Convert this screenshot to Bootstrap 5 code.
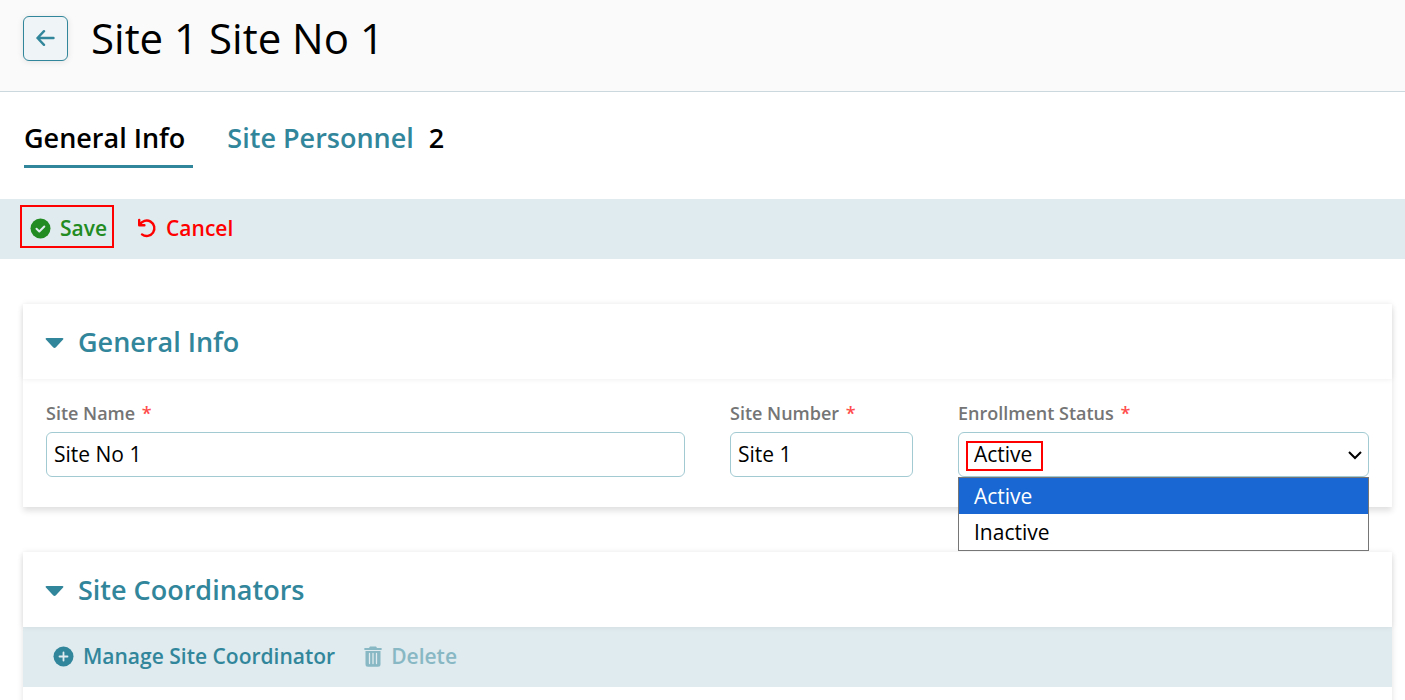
<!DOCTYPE html>
<html lang="en">
<head>
<meta charset="utf-8">
<meta name="viewport" content="width=device-width, initial-scale=1">
<title>Site 1 Site No 1</title>
<link href="https://cdn.jsdelivr.net/npm/bootstrap@5.3.0/dist/css/bootstrap.min.css" rel="stylesheet">
<style>
:root { --teal: #32869b; --teal-pale: #dfebef; --teal-line: #a2cad2; --mark-red: #f00; }
body { font-family: "Open Sans", "Noto Sans", sans-serif; color: #000; background: #fff; font-size: 20px; line-height: 30px; overflow-x: hidden; }
.page-head { background: #fafafa; border-bottom: 1px solid #cbd8de; padding: 8px 24px 23px 23px; gap: 23px; }
.page-head h1 { font-size: 42px; line-height: 60px; font-weight: 400; }
.back-btn { width: 45px; height: 45px; padding: 0 0 2px; border: 1px solid var(--teal); border-radius: 6px; background: #eff5f6; color: var(--teal); box-shadow: 0 1px 6px rgba(0,0,0,.1); }
.site-tabs { padding: 24px 24px 31px; gap: 34px; }
.site-tabs .nav-link { font-size: 27px; line-height: 44px; font-weight: 600; color: var(--teal); padding: 0 8px 5px 0; border-bottom: 3px solid transparent; }
.site-tabs .nav-link.active { color: #000; border-color: var(--teal); }
.tab-count { color: #000; font-weight: 600; margin-left: 8px; }
.action-bar { background: var(--teal-pale); height: 60px; padding-top: 6px; }
.page-bar { padding-left: 20px; gap: 13px; }
.panel-bar { padding-left: 20px; gap: 12px; }
.tool-btn { height: 43px; padding: 3px 5px 0 8px; gap: 9px; font-size: 21px; line-height: 30px; font-weight: 600; border: 2px solid transparent; border-radius: 0; color: var(--teal); }
.tool-btn:disabled { color: var(--teal); opacity: .5; border-color: transparent; }
.tool-btn.save { color: #228b22; border-color: var(--mark-red); }
.tool-btn.cancel { color: #f00; }
.panels { padding: 45px 13px 0 23px; gap: 45px; }
.panel { box-shadow: 0 4px 6px rgba(0,0,0,.12); background: #fff; }
.panel-head { height: 75px; padding: 0 22px; background: #fff; box-shadow: 0 0 6px rgba(0,0,0,.08); position: relative; }
.panel-head h2 { font-size: 27px; line-height: 40px; font-weight: 600; color: var(--teal); }
.panel-head button { gap: 14px; color: inherit; font: inherit; }
.panel-head svg { margin-top: 2px; }
.panel-body { padding: 19px 23px 30px; }
.panel-body .row { --bs-gutter-x: 45px; }
.form-label { font-size: 18px; line-height: 30px; font-weight: 600; color: #757575; margin-bottom: 4px; }
.form-label span { color: #ff4d4d; margin-left: 2px; }
.form-control, .form-select { height: 45px; border: 1px solid var(--teal-line); border-radius: 6px; font-size: 21px; line-height: 30px; color: #000; padding: 0 7px 2px; }
.form-select { padding: 0 36px 2px 15px; background-size: 16px 16px; background-position: right 5px center; background-image: url("data:image/svg+xml,%3csvg xmlns='http://www.w3.org/2000/svg' viewBox='0 0 16 16'%3e%3cpath fill='none' stroke='%23000' stroke-width='2' d='M2 5l6 6 6-6'/%3e%3c/svg%3e"); }
.callout { position: absolute; left: 8px; top: 9px; width: 77px; height: 30px; border: 2px solid var(--mark-red); pointer-events: none; }
.option-list { position: absolute; top: 100%; left: 0; right: 0; z-index: 5; background: #fff; border: 1px solid #767676; font-size: 21px; }
.option-list li { padding: 3px 15px; line-height: 30px; }
.option-list li[aria-selected="true"] { background: #1967d2; color: #fff; }
</style>
</head>
<body>
<header class="page-head d-flex align-items-start">
  <button type="button" class="back-btn btn mt-2 d-flex align-items-center justify-content-center flex-shrink-0" aria-label="Back">
    <svg width="20" height="20" viewBox="0 0 20 20" fill="none" stroke="currentColor" stroke-width="2.400" stroke-linecap="round" stroke-linejoin="round"><path d="M17.500 10H1.500M8 3.200L1.500 10 8 16.800"/></svg>
  </button>
  <h1 class="m-0">Site 1 Site No 1</h1>
</header>

<main>
  <nav class="site-tabs nav" aria-label="Site sections">
    <a class="nav-link active" aria-current="page" href="#general">General Info</a>
    <a class="nav-link" href="#personnel">Site Personnel <span class="tab-count">2</span></a>
  </nav>

  <div class="action-bar page-bar d-flex align-items-start">
    <button type="button" class="tool-btn save btn d-flex align-items-center">
      <svg width="21" height="21" viewBox="0 0 21 21"><circle cx="10.500" cy="10.500" r="10" fill="currentColor"/><path d="M6.500 10.800l2.800 2.700 5-5" fill="none" stroke="#dfebef" stroke-width="2" stroke-linecap="round" stroke-linejoin="round"/></svg>
      Save
    </button>
    <button type="button" class="tool-btn cancel btn d-flex align-items-center">
      <svg width="20" height="20" viewBox="0 0 20 20" fill="none" stroke="currentColor" stroke-width="2.400" stroke-linecap="round" stroke-linejoin="round"><path d="M2.200 2v5.200h5.200M2.800 6.800A7.700 7.700 0 1 1 5 16.400"/></svg>
      Cancel
    </button>
  </div>

  <div class="panels d-flex flex-column">
    <section class="panel" id="general">
      <div class="panel-head d-flex align-items-center">
        <h2 class="m-0"><button type="button" class="btn p-0 border-0 d-flex align-items-center" aria-expanded="true">
          <svg width="19" height="12" viewBox="0 0 19 12" fill="currentColor"><path d="M1.600 1h15.800c1 0 1.300.9.700 1.600l-7.200 7.600c-.8.900-2 .9-2.800 0L.9 2.600C.3 1.900.6 1 1.600 1z"/></svg>
          General Info
        </button></h2>
      </div>
      <div class="panel-body">
        <div class="row">
          <div class="col-6">
            <label class="form-label d-block" for="siteName">Site Name <span>*</span></label>
            <input class="form-control" id="siteName" type="text" value="Site No 1">
          </div>
          <div class="col-2">
            <label class="form-label d-block text-nowrap" for="siteNumber">Site Number <span>*</span></label>
            <input class="form-control" id="siteNumber" type="text" value="Site 1">
          </div>
          <div class="col-4">
            <label class="form-label d-block" for="status">Enrollment Status <span>*</span></label>
            <div class="position-relative">
              <select class="form-select" id="status"><option selected>Active</option><option>Inactive</option></select>
              <span class="callout"></span>
              <ul class="option-list list-unstyled m-0" role="listbox" aria-label="Enrollment Status">
                <li role="option" aria-selected="true">Active</li>
                <li role="option" aria-selected="false">Inactive</li>
              </ul>
            </div>
          </div>
        </div>
      </div>
    </section>

    <section class="panel" id="coordinators">
      <div class="panel-head d-flex align-items-center">
        <h2 class="m-0"><button type="button" class="btn p-0 border-0 d-flex align-items-center" aria-expanded="true">
          <svg width="19" height="12" viewBox="0 0 19 12" fill="currentColor"><path d="M1.600 1h15.800c1 0 1.300.9.700 1.600l-7.200 7.600c-.8.900-2 .9-2.800 0L.9 2.600C.3 1.900.6 1 1.600 1z"/></svg>
          Site Coordinators
        </button></h2>
      </div>
      <div class="action-bar panel-bar d-flex align-items-start">
        <button type="button" class="tool-btn btn d-flex align-items-center">
          <svg width="21" height="21" viewBox="0 0 21 21"><circle cx="10.500" cy="10.500" r="10" fill="currentColor"/><path d="M10.500 6.500v8M6.500 10.500h8" stroke="#dfebef" stroke-width="1.800" stroke-linecap="round"/></svg>
          Manage Site Coordinator
        </button>
        <button type="button" class="tool-btn btn d-flex align-items-center" disabled>
          <svg width="18" height="21" viewBox="0 0 18 21" fill="currentColor"><path d="M6 .5h6l1 1.500h4q.8 0 .8.700v.6q0 .7-.8.700H1Q.2 4 .2 3.300v-.6Q.2 2 1 2h4zM1.500 5h15v13.200a2.500 2.500 0 0 1-2.500 2.500H4a2.500 2.500 0 0 1-2.500-2.500z"/><path d="M5.500 7.500v10M9 7.500v10M12.500 7.500v10" stroke="#dfebef" stroke-width="1.300" stroke-linecap="round"/></svg>
          Delete
        </button>
      </div>
      <div class="panel-body"></div>
    </section>
  </div>
</main>
<script src="https://cdn.jsdelivr.net/npm/bootstrap@5.3.0/dist/js/bootstrap.bundle.min.js"></script>
</body>
</html>
